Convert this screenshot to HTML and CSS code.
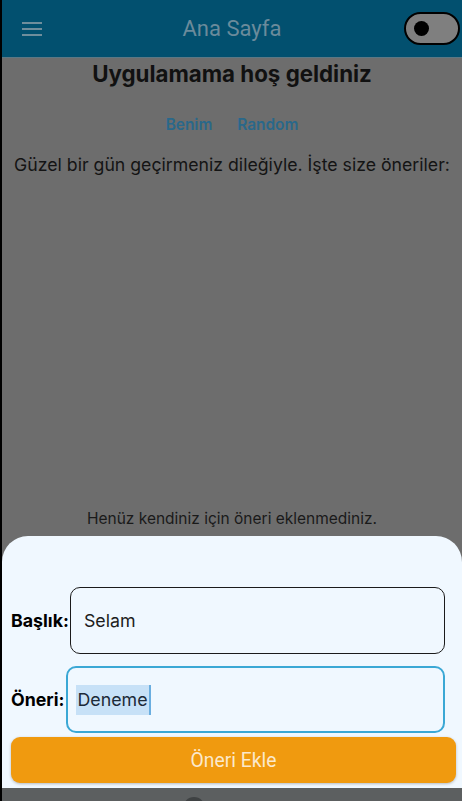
FILE: index.html
```html
<!DOCTYPE html>
<html lang="tr">
<head>
<meta charset="utf-8">
<link rel="stylesheet" href="styles.css">
</head>
<body>
<div class="screen">
  <header class="appbar">
    <svg class="menu" width="20" height="14" viewBox="0 0 20 14"><rect x="0" y="0" width="20" height="2" fill="#6f8e9c"/><rect x="0" y="6" width="20" height="2" fill="#6f8e9c"/><rect x="0" y="12" width="20" height="2" fill="#6f8e9c"/></svg>
    <h1 class="appbar-title">Ana Sayfa</h1>
    <div class="toggle"><span class="knob"></span></div>
  </header>
  <main class="content">
    <h2 class="welcome">Uygulamama hoş geldiniz</h2>
    <nav class="tabs"><span class="tab">Benim</span><span class="tab">Random</span></nav>
    <p class="intro">Güzel bir gün geçirmeniz dileğiyle. İşte size öneriler:</p>
    <p class="empty">Henüz kendiniz için öneri eklenmediniz.</p>
  </main>
  <section class="sheet">
    <div class="row row-first">
      <label class="label">Başlık:</label>
      <div class="field"><span class="value">Selam</span></div>
    </div>
    <div class="row row-second">
      <label class="label">Öneri:</label>
      <div class="field field-focus"><span class="value selected">Deneme</span><span class="caret"></span></div>
    </div>
    <button class="submit">Öneri Ekle</button>
  </section>
  <div class="navbar"><span class="home-dot"></span></div>
</div>
</body>
</html>
```

FILE: styles.css
```css
* { box-sizing: border-box; }
html, body { margin: 0; padding: 0; background: #000; }
body { font-family: "Inter", "Noto Sans", sans-serif; }
.screen {
  width: 462px;
  height: 801px;
  display: flex;
  flex-direction: column;
  border-left: 2px solid #000;
  background: #6d6d6d;
  overflow: hidden;
}
.appbar {
  height: 58px;
  flex: none;
  background: #02506f;
  border-bottom: 1px solid #5b7885;
  display: flex;
  align-items: center;
  position: relative;
  padding: 0 0 0 20px;
}
.menu { flex: none; }
.appbar-title {
  position: absolute;
  left: 0; right: 0;
  margin: 0;
  text-align: center;
  font-family: "Roboto", sans-serif;
  font-weight: 400;
  font-size: 22px;
  color: #6b8b9b;
  pointer-events: none;
  top: 16px;
  line-height: 26px;
}
.toggle {
  margin-left: auto;
  margin-right: 2px;
  width: 56px;
  height: 33px;
  border: 2px solid #000;
  border-radius: 17px;
  background: #7f7f7f;
  display: flex;
  align-items: center;
  padding-left: 8px;
}
.knob {
  width: 15px; height: 15px; border-radius: 50%; background: #000;
}
.content {
  flex: 1;
  display: flex;
  flex-direction: column;
  align-items: center;
  color: #111;
  padding-top: 3px;
}
.welcome {
  margin: 0;
  font-weight: 700;
  font-size: 22.3px;
  line-height: 26px;
  color: #111;
}
.tabs {
  display: flex;
  gap: 25px;
  margin-top: 29px;
  font-size: 15.4px;
  font-weight: 600;
  color: #29688a;
  line-height: 18px;
}
.intro {
  margin: 20px 0 0;
  font-size: 17.7px;
  line-height: 22px;
  color: #141414;
  white-space: nowrap;
}
.empty {
  margin: auto 0 8px;
  font-size: 15.5px;
  line-height: 19px;
  color: #1a1a1a;
}
.sheet {
  flex: none;
  height: 252px;
  background: #f0f8ff;
  border-radius: 26px 26px 0 0;
  padding: 51px 0 0 0;
  display: flex;
  flex-direction: column;
}
.row {
  display: flex;
  align-items: center;
  padding: 0 17px 0 9px;
}
.row-second { margin-top: 12px; }
.label {
  font-weight: 700;
  font-size: 17.8px;
  color: #000;
  flex: none;
}
.row-first .label { margin-right: 1px; }
.row-second .label { margin-right: 1px; }
.field {
  flex: 1;
  height: 67px;
  border: 1px solid #1b1b1b;
  border-radius: 10px;
  display: flex;
  align-items: center;
  padding-left: 13px;
  font-size: 17.8px;
  color: #1d1d1d;
}
.field-focus {
  border: 2px solid #3ba8d5;
  padding-left: 8px;
}
.value { line-height: 30px; }
.selected { background: #c7e1f7; color: #1c2a38; padding: 0 1px 0 2px; }
.caret { width: 2px; height: 30px; background: #6aaee0; }
.submit {
  margin: 4px 6px 0 9px;
  height: 46px;
  border: none;
  border-radius: 9px;
  background: #f09a0f;
  color: #fbe9cc;
  font-family: "Roboto", sans-serif;
  font-size: 19.3px;
  box-shadow: 0 1px 3px rgba(0,0,0,0.25);
}
.navbar {
  flex: none;
  height: 13px;
  background: #5c5f60;
  position: relative;
}
.home-dot {
  position: absolute;
  left: 181px;
  top: 9px;
  width: 22px;
  height: 22px;
  border-radius: 50%;
  background: #3f4243;
}
```
